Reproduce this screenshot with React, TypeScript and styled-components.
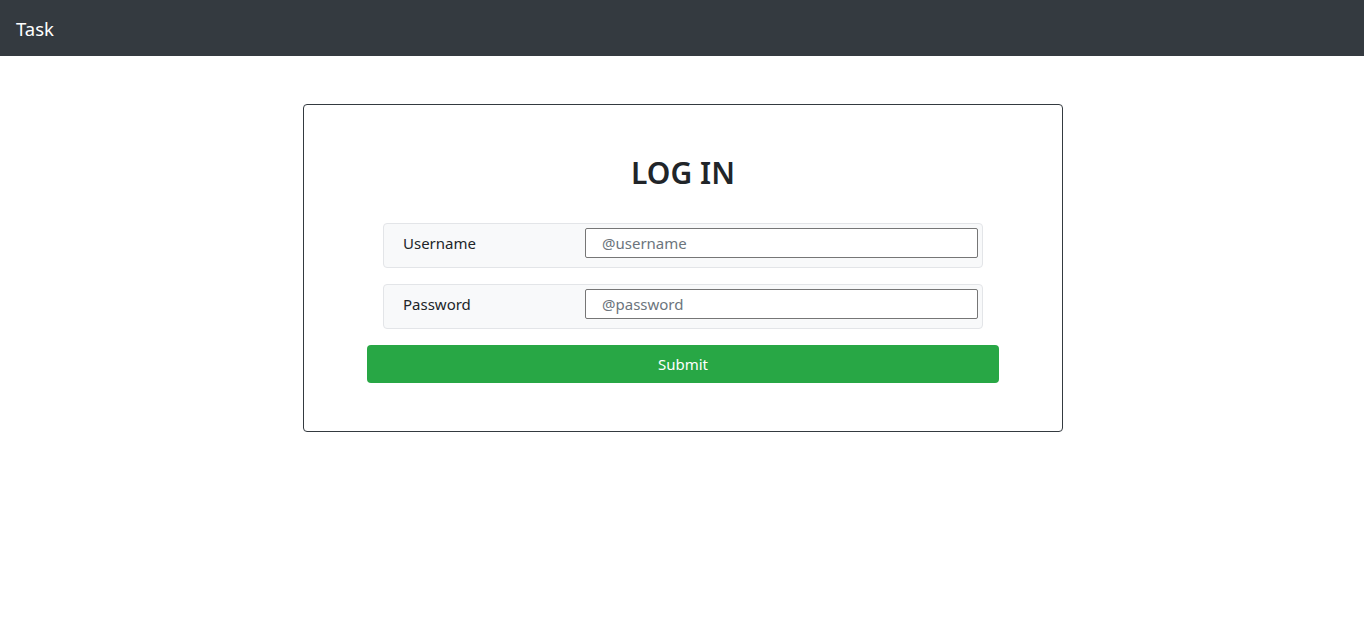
import React from "react";
import styled, { createGlobalStyle } from "styled-components";

const Global = createGlobalStyle`
  html, body { margin: 0; padding: 0; background: #fff; }
  body {
    font-family: "Noto Sans", "Open Sans", sans-serif;
    color: #212529;
    font-size: 16px;
  }
  * { box-sizing: border-box; }
`;

const NavBar = styled.header`
  height: 56px;
  background: #343a40;
  display: flex;
  align-items: center;
  padding: 2px 16px 0;
`;

const Brand = styled.span`
  color: #fff;
  font-size: 18.5px;
  line-height: 24px;
`;

const Main = styled.main`
  display: flex;
  justify-content: center;
  padding: 48px 0 0 2px;
`;

const Card = styled.form`
  width: 760px;
  border: 1px solid #343a40;
  border-radius: 4px;
  padding: 49px 63px 48px;
  display: flex;
  flex-direction: column;
`;

const Title = styled.h1`
  margin: 0 0 31px;
  text-align: center;
  font-size: 30px;
  line-height: 38px;
  font-weight: 600;
  color: #212529;
`;

const Row = styled.div`
  margin: 0 16px 16px;
  height: 45px;
  background: #f8f9fa;
  border: 1px solid #e3e5e8;
  border-radius: 4px;
  display: flex;
  align-items: flex-start;
  padding: 4px 4px 0 19px;
`;

const Label = styled.label`
  width: 182px;
  font-size: 15px;
  line-height: 30px;
  color: #212529;
`;

const Input = styled.input`
  flex: 1;
  height: 30px;
  border: 1px solid #767676;
  border-radius: 2px;
  padding: 0 16px;
  font-family: inherit;
  font-size: 15px;
  color: #212529;
  background: #fff;
  &::placeholder { color: #6c757d; }
`;

const Submit = styled.button`
  height: 38px;
  background: #28a745;
  border: none;
  border-radius: 4px;
  color: #fff;
  font-family: inherit;
  font-size: 15px;
  cursor: pointer;
`;

export default function App() {
  return (
    <>
      <Global />
      <NavBar>
        <Brand>Task</Brand>
      </NavBar>
      <Main>
        <Card onSubmit={(e) => e.preventDefault()}>
          <Title>LOG IN</Title>
          <Row>
            <Label htmlFor="u">Username</Label>
            <Input id="u" placeholder="@username" />
          </Row>
          <Row>
            <Label htmlFor="p">Password</Label>
            <Input id="p" type="password" placeholder="@password" />
          </Row>
          <Submit type="submit">Submit</Submit>
        </Card>
      </Main>
    </>
  );
}
